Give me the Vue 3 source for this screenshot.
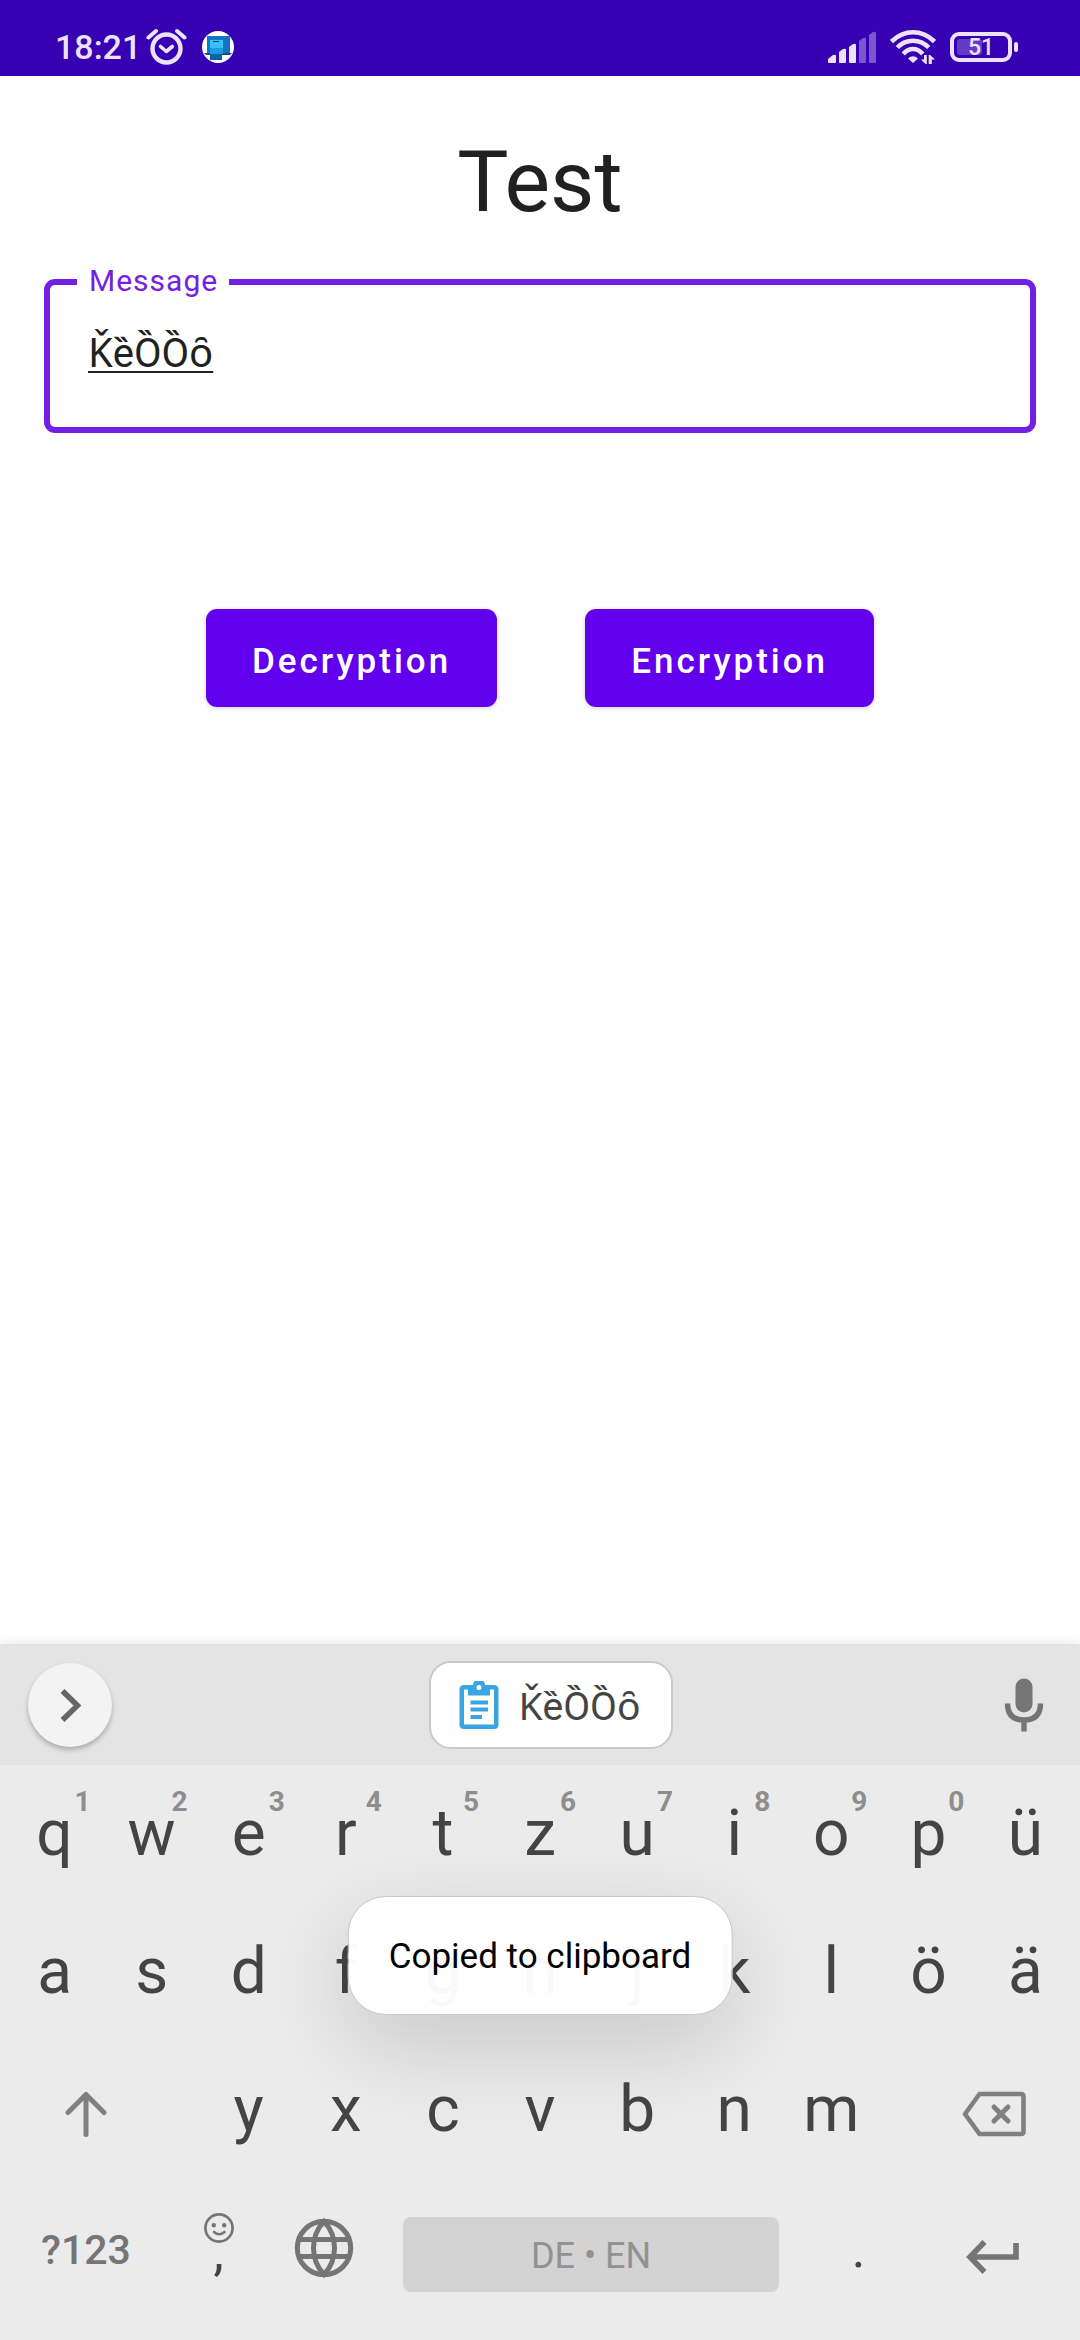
<script setup>
import { ref } from 'vue'

const message = ref('ǨȅȌȌȏ')
const clip = 'ǨȅȌȌȏ'

const topRow = [
  ['q', '1'], ['w', '2'], ['e', '3'], ['r', '4'], ['t', '5'], ['z', '6'],
  ['u', '7'], ['i', '8'], ['o', '9'], ['p', '0'], ['ü', ''],
]
const homeRow = ['a', 's', 'd', 'f', 'g', 'h', 'j', 'k', 'l', 'ö', 'ä']
const bottomRow = ['y', 'x', 'c', 'v', 'b', 'n', 'm']
</script>

<template>
  <div class="screen">
    <header class="status">
      <div class="status-group">
        <span class="clock">18:21</span>
        <svg class="alarm" viewBox="0 0 41 38" aria-hidden="true">
          <g fill="none" stroke="currentColor" stroke-linecap="round" stroke-linejoin="round">
            <circle cx="20.5" cy="20.5" r="14" stroke-width="4.4" />
            <path d="M14.5 18.5l5.8 5 6-5" stroke-width="3.6" />
            <path d="M2.5 9.5L10 3M38.5 9.5L31 3" stroke-width="4" />
          </g>
        </svg>
        <svg class="link-app" viewBox="0 0 32 32" aria-hidden="true">
          <circle cx="16" cy="16" r="16" fill="#fff" />
          <path d="M5 5h23v17H5z" fill="#1573c4" />
          <path d="M2 22h28l-2 2H4z" fill="#0d4f8f" />
          <path d="M8 9h13v11H8z" fill="#35c1f1" />
          <path d="M8 17h13v6H8z" fill="#1b9de2" />
          <path d="M8 23h12v6H8z" fill="#0f5ea8" />
          <path d="M11 10.5h6" stroke="#0b3a66" stroke-width="1" />
        </svg>
      </div>
      <div class="status-group right">
        <svg class="signal" viewBox="0 0 48 32" aria-hidden="true">
          <g fill="currentColor">
            <path d="M0 31v-3l5-4q3-1 3 1v6q0 1-1 1H1q-1 0-1-1z" />
            <path d="M11 31V21l4-3q3-1 3 1v12q0 1-1 1h-5q-1 0-1-1z" />
            <path d="M21 31V16l4-3q3-1 3 1v17q0 1-1 1h-5q-1 0-1-1z" />
            <g opacity=".38">
              <path d="M31 31V10l4-3q3-1 3 1v23q0 1-1 1h-5q-1 0-1-1z" />
              <path d="M41 31V4l4-3q3-1 3 1v29q0 1-1 1h-5q-1 0-1-1z" />
            </g>
          </g>
        </svg>
        <svg class="wifi" viewBox="0 0 46 36" aria-hidden="true">
          <g fill="none" stroke="currentColor" stroke-width="4.6">
            <path d="M1.5 12.5Q11 3.3 23 3.3t21.5 9.2" />
            <path d="M7.3 18.5Q14 11.7 23 11.7t15.7 6.8" />
            <path d="M13.3 25Q17.500 20 23 20t9.700 5" />
          </g>
          <path d="M18 29.5q5-4.500 10 0L23 34z" fill="currentColor" />
          <path d="M36.8 26v9h-1.400l-4.400-4.500h3V26zM38.700 35v-9h1.400l4.900 4.500h-3.200V35z" fill="currentColor" />
        </svg>
        <div class="battery"><span class="charge"></span><span class="level">51</span></div>
      </div>
    </header>

    <main class="content">
      <h1>Test</h1>
      <div class="field">
        <label for="message">Message</label>
        <input id="message" v-model="message" type="text" spellcheck="false" />
      </div>
      <div class="actions">
        <button type="button">Decryption</button>
        <button type="button">Encryption</button>
      </div>
    </main>

    <section class="keyboard">
      <div class="toolbar">
        <button type="button" class="round" aria-label="More">
          <svg viewBox="0 0 84 84" aria-hidden="true">
            <path d="M34.5 28L49.5 42.5 34.5 57" fill="none" stroke="#666" stroke-width="5.5" />
          </svg>
        </button>
        <button type="button" class="clip">
          <svg class="clip-icon" viewBox="0 0 40 48" aria-hidden="true">
            <path fill="#3aa5e2" fill-rule="evenodd" d="M5 4h9a6 6 0 0 1 12 0h9q4.500 0 4.500 4.500v35q0 4.500-4.500 4.500H5q-4.500 0-4.500-4.500v-35Q.5 4 5 4zM5 8.500V43.500h30V8.500h-4v6H9v-6zM20 4a2.500 2.500 0 1 0 0 5 2.500 2.500 0 0 0 0-5z" />
            <path stroke="#3aa5e2" stroke-width="4" d="M11.500 21.500h17.500M11.500 28.500h17.500M11.500 36h11.500" />
          </svg>
          <span>{{ clip }}</span>
        </button>
        <button type="button" class="mic" aria-label="Voice input">
          <svg viewBox="0 0 40 54" aria-hidden="true">
            <rect x="11.5" y="0.5" width="17" height="34" rx="8.5" fill="#757575" />
            <path d="M3.5 25.500q0 16.500 16.500 16.500t16.500-16.500M20 42v11.500" fill="none" stroke="#757575" stroke-width="5.4" />
          </svg>
        </button>
      </div>

      <div class="keys">
        <div class="row">
          <button v-for="[letter, digit] in topRow" :key="letter" type="button" class="key">
            {{ letter }}<sup v-if="digit">{{ digit }}</sup>
          </button>
        </div>
        <div class="row">
          <button v-for="letter in homeRow" :key="letter" type="button" class="key">{{ letter }}</button>
        </div>
        <div class="row">
          <button type="button" class="key side icon" aria-label="Shift">
            <svg class="shift" viewBox="0 0 42 46" aria-hidden="true">
              <path d="M21 43.500V3.500M3 21.500L21 3.500l18 18" fill="none" stroke="#808080" stroke-width="5" stroke-linecap="round" stroke-linejoin="round" />
            </svg>
          </button>
          <span class="spacer"></span>
          <button v-for="letter in bottomRow" :key="letter" type="button" class="key">{{ letter }}</button>
          <span class="spacer"></span>
          <button type="button" class="key side icon" aria-label="Backspace">
            <svg class="erase" viewBox="0 0 64 46" aria-hidden="true">
              <path d="M17.500 3H59q2.500 0 2.500 2.500v35Q61.500 43 59 43H17.500L3 23z" fill="none" stroke="#808080" stroke-width="4.6" stroke-linejoin="round" />
              <path d="M32 16l14 14M46 16L32 30" stroke="#808080" stroke-width="5" stroke-linecap="round" />
            </svg>
          </button>
        </div>
        <div class="row command-row">
          <button type="button" class="key mode">?123</button>
          <button type="button" class="key comma">
            <svg class="smile" viewBox="0 0 30 30" aria-hidden="true">
              <circle cx="15" cy="15" r="13.6" fill="none" stroke="#757575" stroke-width="2.7" />
              <circle cx="9.8" cy="12.2" r="2.2" fill="#757575" />
              <circle cx="20.2" cy="12.2" r="2.2" fill="#757575" />
              <path d="M10 19q5 4.500 10.500 0" fill="none" stroke="#757575" stroke-width="2.6" stroke-linecap="round" />
            </svg>
            <span>,</span>
          </button>
          <button type="button" class="key" aria-label="Switch language">
            <svg class="globe" viewBox="0 0 60 60" aria-hidden="true">
              <g fill="none" stroke="#757575" stroke-width="5">
                <circle cx="30" cy="30" r="26.7" />
                <path d="M4 21.500h52M4 38.500h52M30 3.500C16 18 16 42 30 56.500C44 42 44 18 30 3.500z" />
              </g>
            </svg>
          </button>
          <div class="space-slot"><button type="button" class="space">DE • EN</button></div>
          <button type="button" class="key dot">.</button>
          <button type="button" class="key enter" aria-label="Enter">
            <svg class="return" viewBox="0 0 54 34" aria-hidden="true">
              <path d="M50 3v14H4M18.500 2L4 17l14.500 15" fill="none" stroke="#757575" stroke-width="5.6" />
            </svg>
          </button>
        </div>
      </div>

      <div class="toast" role="status">Copied to clipboard</div>
    </section>
  </div>
</template>

<style>
body {
  background: #fff;
}
</style>

<style scoped>
.screen {
  display: flex;
  flex-direction: column;
  min-height: 100vh;
  background: #fff;
  color: #212121;
  font-family: Roboto, "Noto Sans", sans-serif;
}

button,
input {
  margin: 0;
  padding: 0;
  border: 0;
  background: none;
  color: inherit;
  font: inherit;
}

svg {
  display: block;
  flex: none;
}

.status {
  display: flex;
  align-items: center;
  justify-content: space-between;
  box-sizing: border-box;
  height: 76px;
  padding: 18px 62px 0 55px;
  background: #3700b3;
  color: #ece2fc;
}

.status-group {
  display: flex;
  align-items: center;
}

.status-group.right {
  gap: 14px;
}

.clock {
  font-size: 34px;
  font-weight: 500;
  line-height: 40px;
}

.alarm {
  width: 41px;
  height: 38px;
  margin: 0 15px 0 5px;
}

.link-app {
  width: 32px;
  height: 32px;
}

.signal {
  width: 48px;
  height: 32px;
}

.wifi {
  width: 46px;
  height: 36px;
}

.battery {
  position: relative;
  box-sizing: border-box;
  width: 62px;
  height: 30px;
  margin-right: 6px;
  border: 4px solid currentColor;
  border-radius: 9px;
  text-align: center;
}

.battery::after {
  content: "";
  position: absolute;
  top: 6px;
  right: -10px;
  width: 4px;
  height: 10px;
  border-radius: 2px;
  background: currentColor;
}

.charge {
  position: absolute;
  top: 3px;
  left: 3px;
  width: 25px;
  height: 16px;
  border-radius: 3px;
  background: currentColor;
  opacity: 0.25;
}

.level {
  display: block;
  font-size: 23px;
  font-weight: 500;
  line-height: 24px;
}

.content {
  flex: 1;
  padding: 56px 44px 0;
}

h1 {
  margin: 0;
  font-size: 86px;
  font-weight: 400;
  line-height: 100px;
  text-align: center;
}

.field {
  position: relative;
  margin-top: 47px;
  border: 6px solid #7420e4;
  border-radius: 11px;
}

.field label {
  position: absolute;
  top: -22px;
  left: 27px;
  padding: 0 11px 0 12px;
  background: #fff;
  color: #7420e4;
  font-size: 30px;
  letter-spacing: 1px;
  line-height: 36px;
}

.field input {
  display: block;
  box-sizing: border-box;
  width: 100%;
  height: 142px;
  padding: 0 38px 10px;
  outline: 0;
  font-size: 40px;
  text-decoration: underline;
  text-decoration-thickness: 2px;
  text-underline-offset: 4px;
}

.actions {
  display: flex;
  justify-content: center;
  gap: 88px;
  margin-top: 176px;
}

.actions button {
  height: 98px;
  padding: 6px 46px 0;
  border-radius: 11px;
  background: #6200ee;
  box-shadow: 0 1px 4px rgba(0, 0, 0, 0.2);
  color: #fff;
  font-size: 35px;
  font-weight: 500;
  letter-spacing: 3px;
}

.keyboard {
  position: relative;
  background: #ebebeb;
  box-shadow: 0 0 12px rgba(0, 0, 0, 0.1);
  color: #444;
}

.toolbar {
  display: grid;
  grid-template-columns: 1fr auto 1fr;
  align-items: center;
  height: 121px;
  padding: 0 6px 0 28px;
  background: #e4e4e4;
}

.round {
  width: 84px;
  height: 84px;
  border-radius: 50%;
  background: #f3f3f3;
  box-shadow: 0 3px 5px rgba(0, 0, 0, 0.25);
}

.round svg {
  width: 84px;
  height: 84px;
}

.clip {
  display: flex;
  align-items: center;
  gap: 19px;
  box-sizing: border-box;
  height: 88px;
  padding: 0 30px 0 28px;
  border: 2px solid #c9c9c9;
  border-radius: 22px;
  background: #fff;
  font-size: 39px;
}

.clip-icon {
  width: 40px;
  height: 48px;
}

.mic {
  display: grid;
  place-items: center;
  justify-self: end;
  width: 100px;
  height: 84px;
}

.mic svg {
  width: 40px;
  height: 54px;
}

.keys {
  padding: 0 6px 23px;
}

.row {
  display: flex;
  height: 138px;
}

.command-row {
  display: grid;
  grid-template-columns: 160fr 105fr 105fr 430fr 105fr 163fr;
}

.key {
  position: relative;
  display: flex;
  flex: 1 1 0;
  align-items: center;
  justify-content: center;
  font-size: 64px;
  line-height: 76px;
}

.key sup {
  position: absolute;
  top: 20px;
  left: 50%;
  width: 56px;
  color: #8e8e8e;
  font-size: 28px;
  font-weight: 700;
  line-height: 34px;
  text-align: center;
}

.side {
  flex-grow: 1.65;
}

.spacer {
  flex: 0.35 1 0;
}

.icon {
  padding-top: 8px;
}

.shift {
  width: 42px;
  height: 46px;
}

.erase {
  width: 64px;
  height: 46px;
}

.mode {
  padding-top: 4px;
  color: #757575;
  font-size: 41px;
  font-weight: 500;
}

.comma {
  flex-direction: column;
  justify-content: flex-start;
  padding-top: 34px;
}

.comma,
.dot {
  font-size: 52px;
}

.comma span {
  line-height: 20px;
}

.dot {
  padding-top: 4px;
}

.smile {
  width: 30px;
  height: 30px;
}

.globe {
  width: 60px;
  height: 60px;
}

.space-slot {
  display: flex;
  align-items: center;
  padding: 12px 27px 0;
}

.space {
  flex: 1;
  height: 75px;
  padding-top: 3px;
  border-radius: 8px;
  background: #d3d3d3;
  color: #929292;
  font-size: 36px;
}

.enter {
  padding-top: 18px;
}

.return {
  width: 54px;
  height: 34px;
}

.toast {
  position: absolute;
  bottom: 325px;
  left: 50%;
  box-sizing: border-box;
  height: 119px;
  padding: 0 40px;
  border: 1px solid #c8c8c8;
  border-radius: 38px;
  background: rgba(255, 255, 255, 0.97);
  background-clip: padding-box;
  box-shadow: 0 30px 90px rgba(0, 0, 0, 0.15);
  color: #000;
  font-size: 35px;
  line-height: 119px;
  white-space: nowrap;
  transform: translateX(-50%);
}
</style>
